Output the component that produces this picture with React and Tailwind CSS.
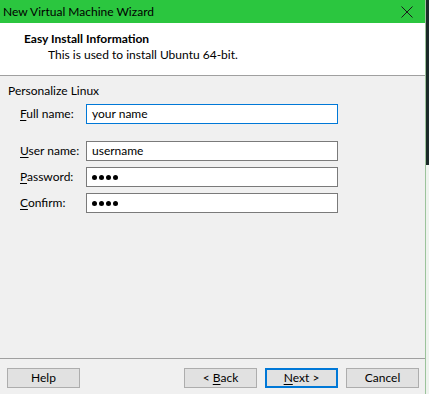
import React from 'react';

const font = { fontFamily: 'Lato, "Segoe UI", sans-serif' };

function Dots() {
  return (
    <div className="flex items-center gap-[2px]">
      <span className="h-[5px] w-[5px] rounded-full bg-black" />
      <span className="h-[5px] w-[5px] rounded-full bg-black" />
      <span className="h-[5px] w-[5px] rounded-full bg-black" />
      <span className="h-[5px] w-[5px] rounded-full bg-black" />
    </div>
  );
}

function Field({ accel, rest, value, secret, focused }) {
  return (
    <div className="flex items-center h-5">
      <span className="w-[66px] pl-5 box-content text-[12px] leading-none text-black">
        <span className="underline underline-offset-2">{accel}</span>
        {rest}
      </span>
      <div
        className={
          'flex items-center h-5 w-[252px] bg-white px-[5px] text-[12px] ' +
          (focused ? 'border border-[#0078d7]' : 'border border-[#7a7a7a]')
        }
      >
        {secret ? <Dots /> : <span>{value}</span>}
      </div>
    </div>
  );
}

function Btn({ children, primary, className = '' }) {
  return (
    <div
      className={
        'flex h-5 w-[73px] items-center justify-center bg-[#e1e1e1] text-[12px] ' +
        (primary ? 'border-2 border-[#0078d7]' : 'border border-[#adadad]') +
        ' ' +
        className
      }
    >
      {children}
    </div>
  );
}

export default function App() {
  return (
    <div className="flex h-[394px] w-[429px] bg-[#f0f0f0] text-black" style={font}>
      <div className="flex w-[426px] flex-col border-r border-[#9cc39c]">
        {/* title bar */}
        <div className="flex h-[23px] items-center justify-between bg-[#2bc63f] pl-[3px] pr-[12px]">
          <span className="text-[12px]">New Virtual Machine Wizard</span>
          <svg width="12" height="12" viewBox="0 0 12 12" className="mt-[1px]">
            <path d="M0.5 0.5 L11.5 11.5 M11.5 0.5 L0.5 11.5" stroke="#1a1a1a" strokeWidth="1" />
          </svg>
        </div>

        {/* header */}
        <div className="flex h-[53px] flex-col bg-white pl-6 pt-[8px] border-b border-[#a0a0a0]">
          <span className="text-[12px] font-bold leading-[16px]">Easy Install Information</span>
          <span className="pl-6 text-[12px] leading-[16px]">This is used to install Ubuntu 64-bit.</span>
        </div>

        {/* body */}
        <div className="flex flex-1 flex-col pt-[7px]">
          <span className="pl-2 text-[12px] leading-[16px]">Personalize Linux</span>
          <div className="mt-[5px] flex flex-col">
            <Field accel="F" rest="ull name:" value="your name" focused />
            <div className="mt-[17px] flex flex-col gap-[6px]">
              <Field accel="U" rest="ser name:" value="username" />
              <Field accel="P" rest="assword:" secret />
              <Field accel="C" rest="onfirm:" secret />
            </div>
          </div>
        </div>

        {/* footer */}
        <div className="flex h-[36px] flex-col border-t border-[#a0a0a0]">
          <div className="mt-[9px] flex items-center pl-[7px]">
            <Btn>Help</Btn>
            <Btn className="ml-[104px]">
              &lt;&nbsp;<span className="underline underline-offset-2">B</span>ack
            </Btn>
            <Btn primary className="ml-[8px]">
              <span className="underline underline-offset-2">N</span>ext &gt;
            </Btn>
            <Btn className="ml-[8px]">Cancel</Btn>
          </div>
        </div>
      </div>
      <div className="flex w-[3px] flex-col">
        <div className="h-[165px] bg-[#1b2a28]" />
        <div className="flex-1 bg-[#eef3ee]" />
      </div>
    </div>
  );
}
